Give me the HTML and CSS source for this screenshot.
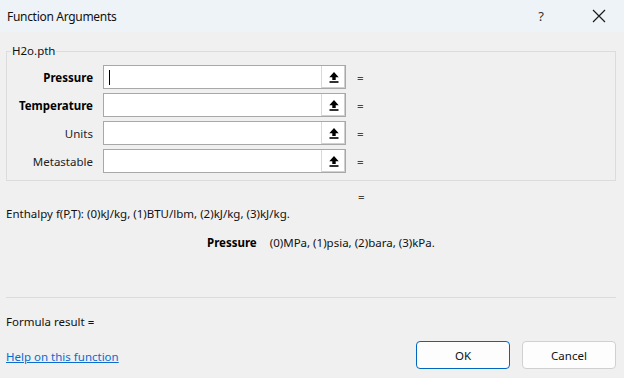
FILE: index.html
```html
<!DOCTYPE html>
<html lang="en">
<head>
    <meta charset="UTF-8">
    <meta name="viewport" content="width=device-width, initial-scale=1.0">
    <title>Function Arguments</title>
    <link rel="stylesheet" href="styles.css">
</head>
<body>
    <div class="dialog">
        <div class="titlebar">
            <span class="title">Function Arguments</span>
            <span class="help-btn">?</span>
            <span class="close-btn">
                <svg width="14" height="14" viewBox="0 0 14 14"><path d="M1 1L13 13M13 1L1 13" stroke="#1a1a1a" stroke-width="1.2" fill="none"/></svg>
            </span>
        </div>

        <div class="content">
            <fieldset class="args">
                <legend>H2o.pth</legend>
                <div class="arg-row">
                    <label class="arg-label bold">Pressure</label>
                    <div class="arg-box">
                        <span class="arg-input"><span class="caret"></span></span>
                        <span class="ref-btn"><svg width="10" height="11" viewBox="0 0 10 11"><path d="M5 0L9.7 5.2H6.7V8H3.3V5.2H0.3Z" fill="#000"/><rect x="0.5" y="9.2" width="9" height="1.6" fill="#000"/></svg></span>
                    </div>
                    <span class="eq">=</span>
                </div>
                <div class="arg-row">
                    <label class="arg-label bold">Temperature</label>
                    <div class="arg-box">
                        <span class="arg-input"></span>
                        <span class="ref-btn"><svg width="10" height="11" viewBox="0 0 10 11"><path d="M5 0L9.7 5.2H6.7V8H3.3V5.2H0.3Z" fill="#000"/><rect x="0.5" y="9.2" width="9" height="1.6" fill="#000"/></svg></span>
                    </div>
                    <span class="eq">=</span>
                </div>
                <div class="arg-row">
                    <label class="arg-label">Units</label>
                    <div class="arg-box">
                        <span class="arg-input"></span>
                        <span class="ref-btn"><svg width="10" height="11" viewBox="0 0 10 11"><path d="M5 0L9.7 5.2H6.7V8H3.3V5.2H0.3Z" fill="#000"/><rect x="0.5" y="9.2" width="9" height="1.6" fill="#000"/></svg></span>
                    </div>
                    <span class="eq">=</span>
                </div>
                <div class="arg-row">
                    <label class="arg-label">Metastable</label>
                    <div class="arg-box">
                        <span class="arg-input"></span>
                        <span class="ref-btn"><svg width="10" height="11" viewBox="0 0 10 11"><path d="M5 0L9.7 5.2H6.7V8H3.3V5.2H0.3Z" fill="#000"/><rect x="0.5" y="9.2" width="9" height="1.6" fill="#000"/></svg></span>
                    </div>
                    <span class="eq">=</span>
                </div>
            </fieldset>

            <div class="result-eq">=</div>
            <p class="description">Enthalpy f(P,T): (0)kJ/kg, (1)BTU/lbm, (2)kJ/kg, (3)kJ/kg.</p>
            <p class="arg-help"><b>Pressure</b><span>(0)MPa, (1)psia, (2)bara, (3)kPa.</span></p>

            <hr class="divider">

            <p class="formula">Formula result =</p>

            <div class="footer">
                <a href="#" class="help-link">Help on this function</a>
                <div class="buttons">
                    <button class="btn primary">OK</button>
                    <button class="btn">Cancel</button>
                </div>
            </div>
        </div>
    </div>
</body>
</html>
```

FILE: styles.css
```css
html, body {
    margin: 0;
    padding: 0;
}
body {
    font-family: 'Segoe UI', 'Noto Sans', sans-serif;
    font-size: 11.5px;
    color: #111;
    background: #f0f0f0;
    width: 624px;
    height: 378px;
    overflow: hidden;
}
.dialog {
    width: 624px;
    height: 378px;
}
.titlebar {
    height: 32px;
    background: #eef3f8;
    display: flex;
    align-items: center;
    padding-left: 7px;
}
.title {
    font-size: 12px;
    letter-spacing: -0.3px;
    flex: 1;
}
.help-btn {
    font-size: 13px;
    color: #333;
    width: 46px;
    text-align: center;
    margin-right: 12px;
}
.close-btn {
    width: 46px;
    display: flex;
    justify-content: center;
    align-items: center;
    margin-right: 2px;
}
.content {
    padding: 0 8px 0 6px;
}
.args {
    margin: 11px 0 0 0;
    padding: 6px 0 7px 0;
    border: 1px solid #dcdcdc;
    min-width: 0;
}
.args legend {
    padding: 0 1px;
    margin-left: 4px;
    line-height: 16px;
}
.arg-row {
    display: flex;
    align-items: center;
    height: 24px;
    margin-bottom: 4px;
}
.arg-row:last-child {
    margin-bottom: 0;
}
.arg-label {
    width: 86px;
    text-align: right;
    margin-right: 10px;
    color: #222;
}
.arg-label.bold {
    font-weight: bold;
    color: #000;
}
.arg-box {
    display: flex;
    width: 243px;
    height: 24px;
    box-sizing: border-box;
    border: 1px solid #a8a8a8;
    background: #fff;
}
.arg-input {
    flex: 1;
    display: flex;
    align-items: center;
    padding-left: 5px;
}
.caret {
    width: 1px;
    height: 15px;
    background: #000;
}
.ref-btn {
    width: 23px;
    border-left: 1px solid #d8d8d8;
    display: flex;
    align-items: center;
    justify-content: center;
    box-shadow: inset 0 -1px 0 #d0d0d0, inset -1px 0 0 #d0d0d0;
}
.eq {
    margin-left: 11px;
    color: #444;
}
.result-eq {
    margin: 8px 0 0 352px;
    line-height: 16px;
    color: #444;
}
.description {
    margin: 1px 0 0 0;
    line-height: 16px;
}
.arg-help {
    margin: 13px 0 0 0;
    padding-left: 201px;
    line-height: 16px;
}
.arg-help b {
    margin-right: 13px;
    color: #000;
}
.divider {
    border: none;
    border-top: 1px solid #dcdcdc;
    margin: 46px 0 0 0;
}
.formula {
    margin: 16px 0 0 0;
    line-height: 16px;
}
.footer {
    display: flex;
    align-items: center;
    justify-content: space-between;
    margin-top: 11px;
}
.help-link {
    color: #0a6bd0;
    text-decoration: underline;
    margin-top: 2px;
}
.buttons {
    display: flex;
    gap: 12px;
}
.btn {
    width: 94px;
    height: 28px;
    font-family: inherit;
    font-size: 11.5px;
    color: #111;
    background: #fdfdfd;
    border: 1px solid #d0d0d0;
    border-radius: 4px;
}
.btn.primary {
    border-color: #0067c0;
}
```
